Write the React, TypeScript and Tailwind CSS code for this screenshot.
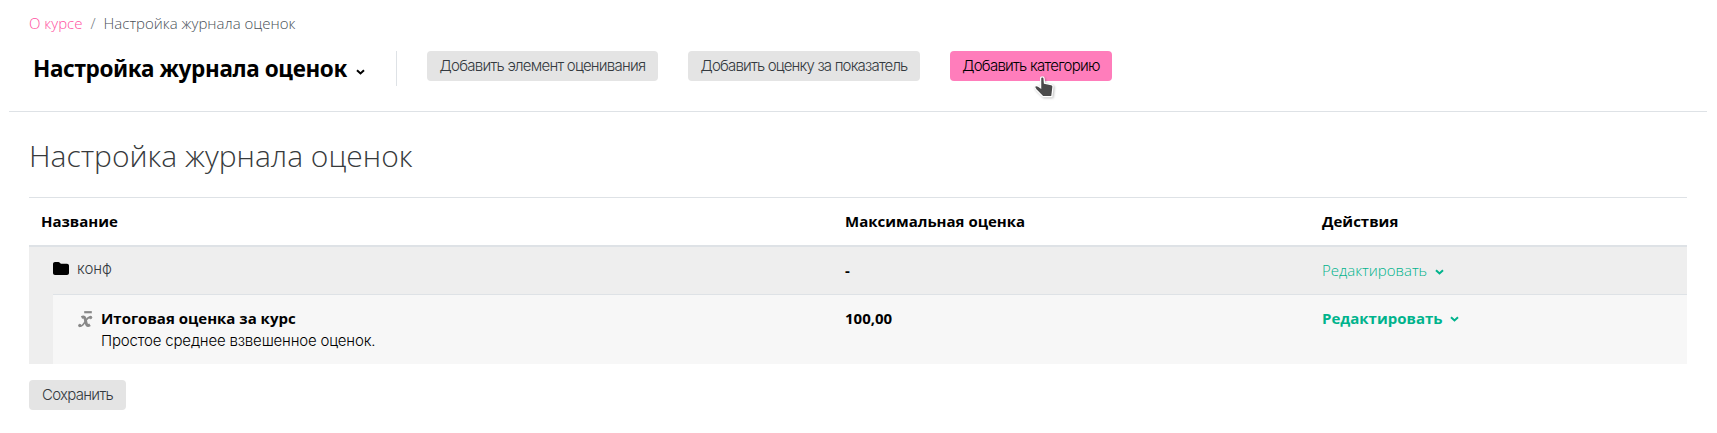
import type { ReactNode } from 'react'

interface GradeRow {
  id: string
  grade: string
}

const category: GradeRow = { id: 'конф', grade: '-' }
const total: GradeRow = { id: 'Итоговая оценка за курс', grade: '100,00' }

function Caret({ className }: { className: string }) {
  return (
    <svg viewBox="0 0 9 6" fill="none" className={className}>
      <path d="M1 1.2 4.5 4.4 8 1.2" stroke="currentColor" strokeWidth="2" />
    </svg>
  )
}

function FolderIcon() {
  return (
    <svg viewBox="0 0 16 13" className="h-[13px] w-4 fill-black">
      <path d="M2 0h3.400c.6 0 1 .2 1.400.7l1.100 1.100h6.100c1.100 0 2 .9 2 2V11c0 1.100-.9 2-2 2H2c-1.100 0-2-.9-2-2V2C0 .9.9 0 2 0Z" />
    </svg>
  )
}

// Aggregated mean: italic x with a bar above it
function MeanIcon() {
  return (
    <svg viewBox="0 0 15 17" className="h-[17px] w-[15px]" fill="none" stroke="#888">
      <path d="M6.200 1.200h7.600" strokeWidth="2.200" />
      <path d="M3.500 6.500C6.200 5.200 7 6.500 7.600 9.700c.7 3.500 1.200 6 4.400 4" strokeWidth="2.900" />
      <path d="M13.300 6.300C9.800 4.800 8.300 9.200 6.300 12c-1.500 2.300-3.200 4-5.300 2.600" strokeWidth="1.600" />
      <circle cx="12.600" cy="6.500" r="1.200" fill="#888" />
      <circle cx="1.800" cy="14.500" r="1.200" fill="#888" />
    </svg>
  )
}

function HandCursor() {
  return (
    <svg
      viewBox="0 0 20 22"
      className="absolute left-[84px] top-[25px] h-[22px] w-5 drop-shadow-[1px_1px_1px_rgba(0,0,0,0.25)]"
    >
      <path
        d="M6.600 2.500c0-2.200 3.300-2.200 3.500 0l.4 4.600 6.800 1.500c1.200.3 1.800 1 1.700 2.200l-.6 5.200-.6 4.700H8.900L2.300 14C.7 12.200.3 10.900 1.100 10c.8-.8 2-.5 3.300.3l2.200 1.500Z"
        fill="#4a4a4a"
        stroke="#fff"
        strokeWidth="1.300"
      />
    </svg>
  )
}

function Button({ children, className = '' }: { children: ReactNode; className?: string }) {
  return (
    <button
      className={`relative h-[30px] shrink-0 rounded-[4px] text-center font-['Inter',sans-serif] text-[15px] leading-[28px] font-light whitespace-nowrap ${className}`}
    >
      {children}
    </button>
  )
}

export default function App() {
  return (
    <div className="h-[433px] w-full overflow-hidden bg-white font-['Open_Sans',sans-serif] text-[15px] text-black">
      <header className="mr-[10px] ml-[9px] h-[112px] border-b border-[#dee2e6] px-5 pt-3">
        <nav className="flex h-[22px] items-center leading-[22px] font-light whitespace-nowrap">
          <a className="text-[#ff4fa0]">О курсе</a>
          <span className="px-2 text-[#6c757d]">/</span>
          <span className="text-[#495057]">Настройка журнала оценок</span>
        </nav>
        <div className="mt-[17px] flex">
          <div className="flex h-[35px] w-[368px] items-center border-r border-[#dee2e6] pl-1">
            <h1 className="font-['Noto_Sans',sans-serif] text-[22.5px] leading-[35px] font-bold tracking-[-0.35px] whitespace-nowrap">
              Настройка журнала оценок
            </h1>
            <Caret className="mt-[7px] ml-[9px] h-1.5 w-[9px]" />
          </div>
          <div className="ml-[30px] flex gap-[30px]">
            <Button className="w-[231px] bg-[#e4e4e4] tracking-[-0.75px] text-[#343a40]">
              Добавить элемент оценивания
            </Button>
            <Button className="w-[232px] bg-[#e4e4e4] tracking-[-0.82px] text-[#343a40]">
              Добавить оценку за показатель
            </Button>
            <Button className="w-[162px] bg-[#ff7dbb] tracking-[-0.75px] text-black">
              Добавить категорию
              <HandCursor />
            </Button>
          </div>
        </div>
      </header>

      <main className="px-[29px] pt-[21px]">
        <h2 className="h-16 text-[30px] leading-[45px] font-light text-[#373a3c]">Настройка журнала оценок</h2>
        <table className="w-[1658px] table-fixed border-separate border-spacing-0 text-left">
          <colgroup>
            <col className="w-6" />
            <col className="w-[780px]" />
            <col className="w-[477px]" />
            <col />
          </colgroup>
          <thead>
            <tr className="h-[50px] font-bold">
              <th colSpan={2} className="border-t border-b-2 border-[#dee2e6] pl-3">Название</th>
              <th className="border-t border-b-2 border-[#dee2e6] pl-3">Максимальная оценка</th>
              <th className="border-t border-b-2 border-[#dee2e6] pl-3">Действия</th>
            </tr>
          </thead>
          <tbody>
            <tr className="h-[47px] bg-[#eee]">
              <td rowSpan={2} />
              <td>
                <div className="-mt-[5px] flex items-center gap-2 font-['Inter',sans-serif] text-[15px] font-light text-[#343a40]">
                  <FolderIcon />
                  <span className="pt-0.5">{category.id}</span>
                </div>
              </td>
              <td className="pl-3 font-bold">{category.grade}</td>
              <td className="pl-3">
                <a className="flex items-center font-light text-[#00b38c]">
                  Редактировать
                  <Caret className="mt-0.5 ml-2 h-1.5 w-[9px]" />
                </a>
              </td>
            </tr>
            <tr className="h-[70px] bg-[#f7f7f7] align-top">
              <td className="border-t border-[#dee2e6] pt-3">
                <div className="flex gap-2 pl-[25px]">
                  <div className="pt-1">
                    <MeanIcon />
                  </div>
                  <div className="leading-[22px]">
                    <div className="font-bold">{total.id}</div>
                    <div className="pt-px font-['Inter',sans-serif] text-[15px] font-light tracking-[-0.17px]">
                      Простое среднее взвешенное оценок.
                    </div>
                  </div>
                </div>
              </td>
              <td className="border-t border-[#dee2e6] pt-3 pl-3 leading-[22px] font-bold">{total.grade}</td>
              <td className="border-t border-[#dee2e6] pt-3 pl-3 leading-[22px]">
                <a className="flex items-center font-bold text-[#00b38c]">
                  Редактировать
                  <Caret className="mt-0.5 ml-2 h-1.5 w-[9px]" />
                </a>
              </td>
            </tr>
          </tbody>
        </table>
        <Button className="mt-4 w-[97px] bg-[#e4e4e4] tracking-[-0.7px] text-[#343a40]">Сохранить</Button>
      </main>
    </div>
  )
}
